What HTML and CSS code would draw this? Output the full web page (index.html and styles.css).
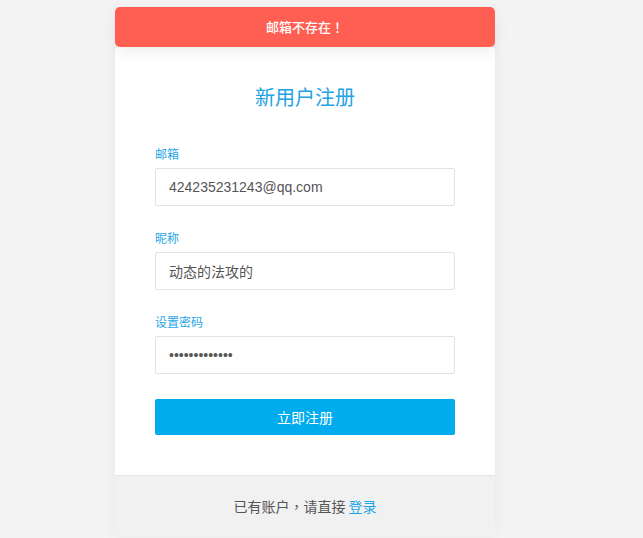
FILE: index.html
```html
<!DOCTYPE html>
<html lang="zh-CN">
<head>
<meta charset="utf-8">
<title>新用户注册</title>
<link rel="stylesheet" href="styles.css">
</head>
<body>
<div class="toast">邮箱不存在<span class="punct" lang="zh-TW">！</span></div>
<div class="card">
  <div class="card-body">
    <h1 class="title">新用户注册</h1>
    <form class="form">
      <div class="field">
        <label class="label">邮箱</label>
        <input class="input" type="text" value="424235231243@qq.com">
      </div>
      <div class="field">
        <label class="label">昵称</label>
        <input class="input" type="text" value="动态的法攻的">
      </div>
      <div class="field">
        <label class="label">设置密码</label>
        <input class="input" type="password" value="1234567890123">
      </div>
      <button class="btn" type="button">立即注册</button>
    </form>
  </div>
  <div class="card-footer">已有账户<span class="punct" lang="zh-TW">，</span>请直接 <a class="link" href="#">登录</a></div>
</div>
</body>
</html>
```

FILE: styles.css
```css
html, body {
  margin: 0;
  padding: 0;
}
body {
  background: #f4f4f4;
  font-family: "Liberation Sans", "Noto Sans CJK SC", sans-serif;
  color: #555;
  position: relative;
  min-height: 538px;
}
.punct {
  font-family: "Noto Sans CJK TC", "Noto Sans CJK SC", sans-serif;
}
.toast {
  position: absolute;
  left: 115px;
  top: 7px;
  width: 380px;
  height: 40px;
  line-height: 40px;
  background: #ff5f53;
  color: #fff;
  border-radius: 5px;
  text-align: center;
  font-size: 13px;
  font-weight: 500;
  font-family: "Noto Sans CJK SC", sans-serif;
  box-shadow: 0 4px 16px rgba(0,0,0,0.08);
  z-index: 2;
}
.card {
  margin: 47px 0 0 115px;
  width: 380px;
  background: #fff;
  border-radius: 4px;
  box-shadow: 0 0 16px rgba(0,0,0,0.06);
  overflow: hidden;
}
.card-body {
  padding: 38px 40px 40px;
}
.title {
  margin: 0;
  font-size: 20px;
  line-height: 24px;
  font-weight: normal;
  text-align: center;
  color: #22a3e4;
  font-family: "Noto Sans CJK SC", sans-serif;
}
.form {
  display: flex;
  flex-direction: column;
  margin-top: 36px;
}
.field {
  display: flex;
  flex-direction: column;
  gap: 5px;
  margin-bottom: 23px;
}
.field:nth-child(3) {
  margin-bottom: 25px;
}
.label {
  font-size: 12px;
  line-height: 18px;
  color: #26a5e6;
  font-family: "Noto Sans CJK SC", sans-serif;
}
.input {
  box-sizing: border-box;
  width: 300px;
  height: 38px;
  border: 1px solid #e2e2e2;
  border-radius: 2px;
  padding: 0 13px;
  font-size: 14px;
  color: #555;
  font-family: "Liberation Sans", "Noto Sans CJK SC", sans-serif;
  background: #fff;
  outline: none;
}
.btn {
  width: 300px;
  height: 36px;
  border: none;
  border-radius: 2px;
  background: #00abee;
  color: #fff;
  font-size: 14px;
  font-family: "Noto Sans CJK SC", sans-serif;
  padding: 0;
}
.card-footer {
  height: 60px;
  line-height: 60px;
  background: #f1f1f1;
  border-top: 1px solid #e6e6e6;
  text-align: center;
  font-size: 14px;
  color: #555;
  font-family: "Noto Sans CJK SC", sans-serif;
}
.link {
  color: #1ba4e6;
  text-decoration: none;
}
```
